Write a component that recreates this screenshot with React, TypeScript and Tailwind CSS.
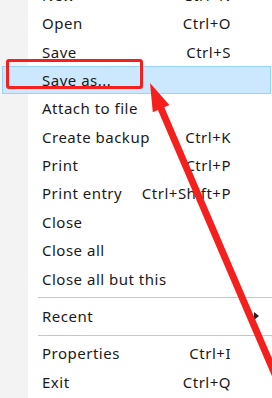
import React from "react";

type Item =
  | { kind: "item"; label: string; shortcut?: string; active?: boolean; submenu?: boolean }
  | { kind: "sep" };

const items: Item[] = [
  { kind: "item", label: "New", shortcut: "Ctrl+N" },
  { kind: "item", label: "Open", shortcut: "Ctrl+O" },
  { kind: "item", label: "Save", shortcut: "Ctrl+S" },
  { kind: "item", label: "Save as...", active: true },
  { kind: "item", label: "Attach to file" },
  { kind: "item", label: "Create backup", shortcut: "Ctrl+K" },
  { kind: "item", label: "Print", shortcut: "Ctrl+P" },
  { kind: "item", label: "Print entry", shortcut: "Ctrl+Shift+P" },
  { kind: "item", label: "Close" },
  { kind: "item", label: "Close all" },
  { kind: "item", label: "Close all but this" },
  { kind: "sep" },
  { kind: "item", label: "Recent", submenu: true },
  { kind: "sep" },
  { kind: "item", label: "Properties", shortcut: "Ctrl+I" },
  { kind: "item", label: "Exit", shortcut: "Ctrl+Q" },
];

function Row({ item }: { item: Extract<Item, { kind: "item" }> }) {
  if (item.active) {
    return (
      <div className="flex items-center h-[28.4px] ml-[2px] mr-[1px] pl-[39px] pr-[38px] border border-[#99d1ff] bg-[#cce8ff]">
        <span className="flex-1">{item.label}</span>
        {item.shortcut && <span>{item.shortcut}</span>}
      </div>
    );
  }
  return (
    <div className="flex items-center h-[28.4px] pl-[42px] pr-[41px]">
      <span className="flex-1 whitespace-nowrap">{item.label}</span>
      {item.shortcut && <span className="whitespace-nowrap">{item.shortcut}</span>}
      {item.submenu && (
        <svg width="5" height="8" viewBox="0 0 5 8" className="mr-[-28px]">
          <polygon points="0,0 5,4 0,8" fill="#222" />
        </svg>
      )}
    </div>
  );
}

export default function App() {
  return (
    <div
      className="relative w-[272px] h-[398px] overflow-hidden bg-[linear-gradient(to_right,#f3f3f3_28px,#ffffff_28px)] text-[15px] tracking-[0.5px] text-[#1a1a1a]"
      style={{ fontFamily: '"Noto Sans", "Liberation Sans", sans-serif' }}
    >
      <div className="flex flex-col mt-[-19.2px]">
        {items.map((it, i) =>
          it.kind === "sep" ? (
            <div key={i} className="h-[9px] pt-[4px] pl-[38px]">
              <div className="h-px bg-[#c6c6c6]" />
            </div>
          ) : (
            <Row key={i} item={it} />
          )
        )}
      </div>

      {/* annotation: red rectangle */}
      <div className="absolute left-[6px] top-[59px] w-[137px] h-[30px] border-[3px] border-[#f5201e] rounded-[3px]" />

      {/* annotation: red arrow */}
      <svg className="absolute left-0 top-0" width="272" height="398" viewBox="0 0 272 398">
        <polygon
          points="150,83 169.4,105.1 164.3,107.3 291.2,403.3 284.8,406.1 157.9,110.1 152.8,112.3"
          fill="#f5201e"
        />
      </svg>
    </div>
  );
}
